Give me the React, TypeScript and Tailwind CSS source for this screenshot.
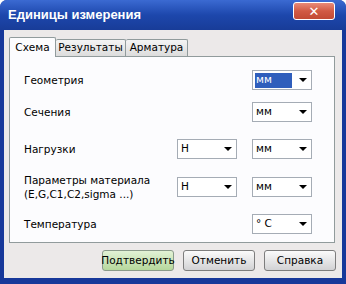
import React from "react";

const font = { fontFamily: '"DejaVu Sans", "Liberation Sans", sans-serif' };

function Select({ value, highlighted = false }: { value: string; highlighted?: boolean }) {
  return (
    <div className="flex h-[20px] w-[60px] items-center border border-[#a5acb5] bg-white pl-[2px] pr-[4px]">
      <div
        className={
          highlighted
            ? "flex h-[15px] w-[37px] items-center bg-[#2f5ebc] pl-[1px] text-[10.5px] text-white"
            : "flex h-[15px] w-[37px] items-center pl-[1px] text-[10.5px] text-black"
        }
      >
        {value}
      </div>
      <div className="ml-auto h-0 w-0 border-x-[4px] border-t-[4px] border-x-transparent border-t-black" />
    </div>
  );
}

function Row({
  label,
  first,
  second,
  highlighted,
  className,
}: {
  label: React.ReactNode;
  first?: string;
  second: string;
  highlighted?: boolean;
  className: string;
}) {
  return (
    <div className={`flex items-center ${className}`}>
      <div className="flex-1 text-[10.5px] leading-[14px] text-black">{label}</div>
      <div className="w-[60px]">{first && <Select value={first} />}</div>
      <div className="ml-[15px]">
        <Select value={second} highlighted={highlighted} />
      </div>
    </div>
  );
}

function Button({ children, primary = false }: { children: React.ReactNode; primary?: boolean }) {
  return (
    <button
      className={
        primary
          ? "flex h-[21px] w-[72px] items-center justify-center rounded-[3px] border border-[#8a9a8a] bg-gradient-to-b from-[#e2f2d6] to-[#b6d89c] text-[10.5px] text-black"
          : "flex h-[21px] w-[72px] items-center justify-center rounded-[3px] border border-[#7d7d7d] bg-gradient-to-b from-[#fbfbfb] to-[#d2d2d4] text-[10.5px] text-black"
      }
    >
      {children}
    </button>
  );
}

export default function App() {
  return (
    <div style={font} className="flex h-[284px] w-[346px] flex-col overflow-hidden rounded-t-[7px] bg-[#17389a]">
      {/* Title bar */}
      <div className="flex h-[30px] items-center bg-gradient-to-b from-[#3b6ad2] via-[#1d47ac] to-[#183c98] pl-[8px] pr-[11px]">
        <span className="font-['Liberation_Sans',sans-serif] text-[13px] font-bold text-white">Единицы измерения</span>
        <button className="ml-auto mb-[8px] flex h-[18px] w-[42px] items-center justify-center rounded-[3px] border border-white bg-gradient-to-b from-[#e88a78] via-[#d15a44] to-[#c24a34] text-[13px] font-bold leading-none text-white">
          ✕
        </button>
      </div>

      {/* Body */}
      <div className="mx-[4px] mb-[6px] flex flex-1 flex-col bg-[#ece9e9] px-[5px] pt-[7px]">
        {/* Tabs */}
        <div className="flex h-[19px] items-end">
          <div className="relative z-10 -mb-[1px] flex h-[20px] w-[47px] items-center justify-center rounded-t-[2px] border border-b-0 border-[#919b9c] bg-[#fcfcfe] text-[10.5px] text-black">
            Схема
          </div>
          <div className="flex h-[17px] w-[70px] items-center justify-center rounded-t-[2px] border border-b-0 border-l-0 border-[#919b9c] bg-gradient-to-b from-[#f4f4f4] to-[#dcdcdc] text-[10.5px] text-black">
            Результаты
          </div>
          <div className="flex h-[17px] w-[62px] items-center justify-center rounded-t-[2px] border border-b-0 border-l-0 border-[#919b9c] bg-gradient-to-b from-[#f4f4f4] to-[#dcdcdc] text-[10.5px] text-black">
            Арматура
          </div>
        </div>

        {/* Panel */}
        <div className="h-[187px] w-[326px] border border-[#919b9c] bg-[#fcfcfe] pl-[14px] pr-[22px] pt-[13px]">
          <Row label="Геометрия" second="мм" highlighted className="h-[20px]" />
          <Row label="Сечения" second="мм" className="mt-[12px] h-[20px]" />
          <Row label="Нагрузки" first="Н" second="мм" className="mt-[17px] h-[20px]" />
          <Row
            label={
              <>
                Параметры материала
                <br />
                (E,G,C1,C2,sigma ...)
              </>
            }
            first="Н"
            second="мм"
            className="mt-[18px] h-[20px]"
          />
          <Row label="Температура" second="° С" className="mt-[17px] h-[20px]" />
        </div>

        {/* Buttons */}
        <div className="mt-[7px] flex justify-end gap-[9px] pr-[1px]">
          <Button primary>Подтвердить</Button>
          <Button>Отменить</Button>
          <Button>Справка</Button>
        </div>
      </div>
    </div>
  );
}
